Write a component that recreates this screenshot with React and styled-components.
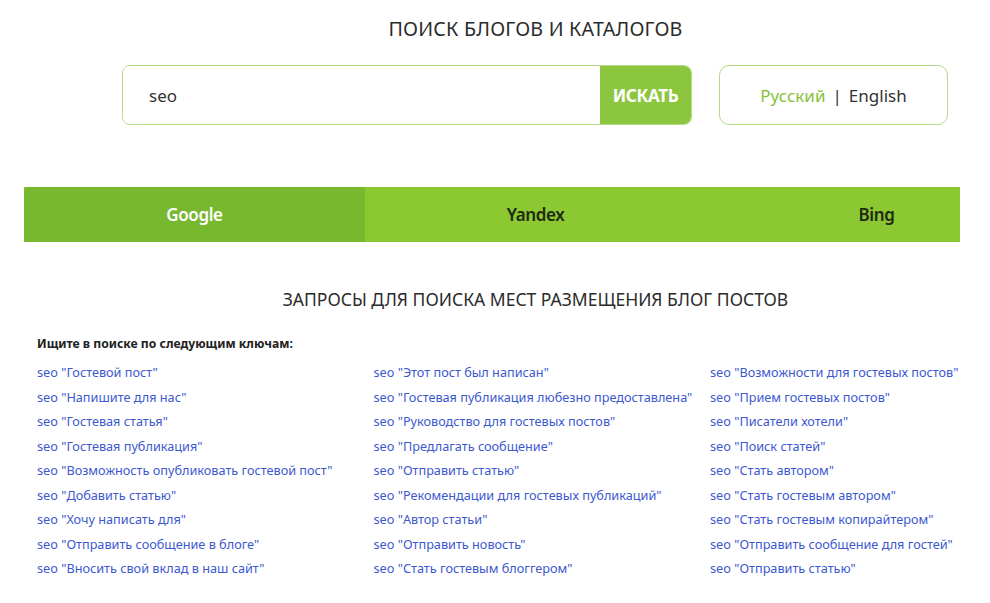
import * as React from 'react'
import styled, { createGlobalStyle } from 'styled-components'

const GlobalStyle = createGlobalStyle`
  html, body {
    margin: 0;
    padding: 0;
    background: #fff;
  }
  body {
    font-family: "Noto Sans", "Open Sans", Arial, sans-serif;
    color: #333;
  }
`

// the visible page is the left part of a wider layout, so headings are
// offset to stay centred on the full (1023px) grid
const Page = styled.div`
  width: 936px;
  margin-left: 24px;
  padding-top: 16px;
`

const Title = styled.h1`
  margin: 0;
  padding-left: 87px;
  font-size: 19.7px;
  line-height: 26px;
  font-weight: 400;
  text-align: center;
  color: #2b2b2b;
  letter-spacing: 0.2px;
`

const TopRow = styled.div`
  display: flex;
  gap: 27px;
  margin-top: 23px;
  padding-left: 98px;
`

const SearchForm = styled.form`
  display: flex;
  width: 570px;
  height: 60px;
  box-sizing: border-box;
  border: 1px solid #b4da82;
  border-radius: 8px;
  overflow: hidden;
  margin: 0;
`

const SearchInput = styled.input`
  flex: 1;
  border: none;
  outline: none;
  padding: 0 0 0 26px;
  font-family: inherit;
  font-size: 17px;
  color: #333;
  background: #fff;
`

const SearchButton = styled.button`
  width: 91px;
  border: none;
  background: #8cc63e;
  color: #fff;
  font-family: inherit;
  font-size: 17px;
  font-weight: 700;
  letter-spacing: -0.3px;
  cursor: pointer;
`

const LangBox = styled.div`
  display: flex;
  align-items: center;
  justify-content: center;
  gap: 7px;
  width: 229px;
  height: 60px;
  box-sizing: border-box;
  border: 1px solid #b4da82;
  border-radius: 10px;
  font-size: 17px;
`

const Lang = styled.span`
  color: ${props => (props.active ? '#86c23a' : '#333')};
`

const Divider = styled.span`
  color: #333;
`

const Tabs = styled.div`
  display: grid;
  grid-template-columns: 341px 341px 1fr;
  height: 55px;
  margin-top: 62px;
  background: #8bc832;
`

const Tab = styled.div`
  display: flex;
  align-items: center;
  justify-content: center;
  padding-left: ${props => (props.cut ? '87px' : '0')};
  font-size: 17px;
  font-weight: 600;
  letter-spacing: -0.4px;
  color: ${props => (props.active ? '#fff' : '#1e2a10')};
  background: ${props => (props.active ? '#77b82f' : 'transparent')};
  border-top-left-radius: ${props => (props.active ? '4px' : '0')};
`

const SectionTitle = styled.h2`
  margin: 46px 0 0;
  padding-left: 87px;
  font-size: 17.5px;
  line-height: 22px;
  font-weight: 400;
  text-align: center;
  color: #2b2b2b;
`

const Keys = styled.div`
  padding-left: 13px;
  margin-top: 25px;
`

const Intro = styled.p`
  margin: 0 0 7px;
  font-size: 12.2px;
  line-height: 18px;
  font-weight: 700;
  color: #222;
`

const Columns = styled.div`
  display: grid;
  grid-template-columns: 336.5px 336.5px 1fr;
`

const LinkList = styled.ul`
  list-style: none;
  margin: 0;
  padding: 0;
`

const KeyLink = styled.a`
  display: block;
  font-size: 12.7px;
  line-height: 24.5px;
  color: #3d58cf;
  text-decoration: none;
  white-space: nowrap;
`

const columns = [
  [
    'Гостевой пост',
    'Напишите для нас',
    'Гостевая статья',
    'Гостевая публикация',
    'Возможность опубликовать гостевой пост',
    'Добавить статью',
    'Хочу написать для',
    'Отправить сообщение в блоге',
    'Вносить свой вклад в наш сайт'
  ],
  [
    'Этот пост был написан',
    'Гостевая публикация любезно предоставлена',
    'Руководство для гостевых постов',
    'Предлагать сообщение',
    'Отправить статью',
    'Рекомендации для гостевых публикаций',
    'Автор статьи',
    'Отправить новость',
    'Стать гостевым блоггером'
  ],
  [
    'Возможности для гостевых постов',
    'Прием гостевых постов',
    'Писатели хотели',
    'Поиск статей',
    'Стать автором',
    'Стать гостевым автором',
    'Стать гостевым копирайтером',
    'Отправить сообщение для гостей',
    'Отправить статью'
  ]
]

const engines = ['Google', 'Yandex', 'Bing']

export default function App () {
  return (
    <>
      <GlobalStyle />
      <Page>
        <Title>ПОИСК БЛОГОВ И КАТАЛОГОВ</Title>
        <TopRow>
          <SearchForm onSubmit={e => e.preventDefault()}>
            <SearchInput defaultValue='seo' />
            <SearchButton type='submit'>ИСКАТЬ</SearchButton>
          </SearchForm>
          <LangBox>
            <Lang active>Русский</Lang>
            <Divider>|</Divider>
            <Lang>English</Lang>
          </LangBox>
        </TopRow>
        <Tabs>
          {engines.map((name, i) => (
            <Tab key={name} active={i === 0} cut={i === 2}>{name}</Tab>
          ))}
        </Tabs>
        <SectionTitle>ЗАПРОСЫ ДЛЯ ПОИСКА МЕСТ РАЗМЕЩЕНИЯ БЛОГ ПОСТОВ</SectionTitle>
        <Keys>
          <Intro>Ищите в поиске по следующим ключам:</Intro>
          <Columns>
            {columns.map((list, ci) => (
              <LinkList key={ci}>
                {list.map((text, li) => (
                  <li key={li}>
                    <KeyLink href='#'>seo "{text}"</KeyLink>
                  </li>
                ))}
              </LinkList>
            ))}
          </Columns>
        </Keys>
      </Page>
    </>
  )
}
